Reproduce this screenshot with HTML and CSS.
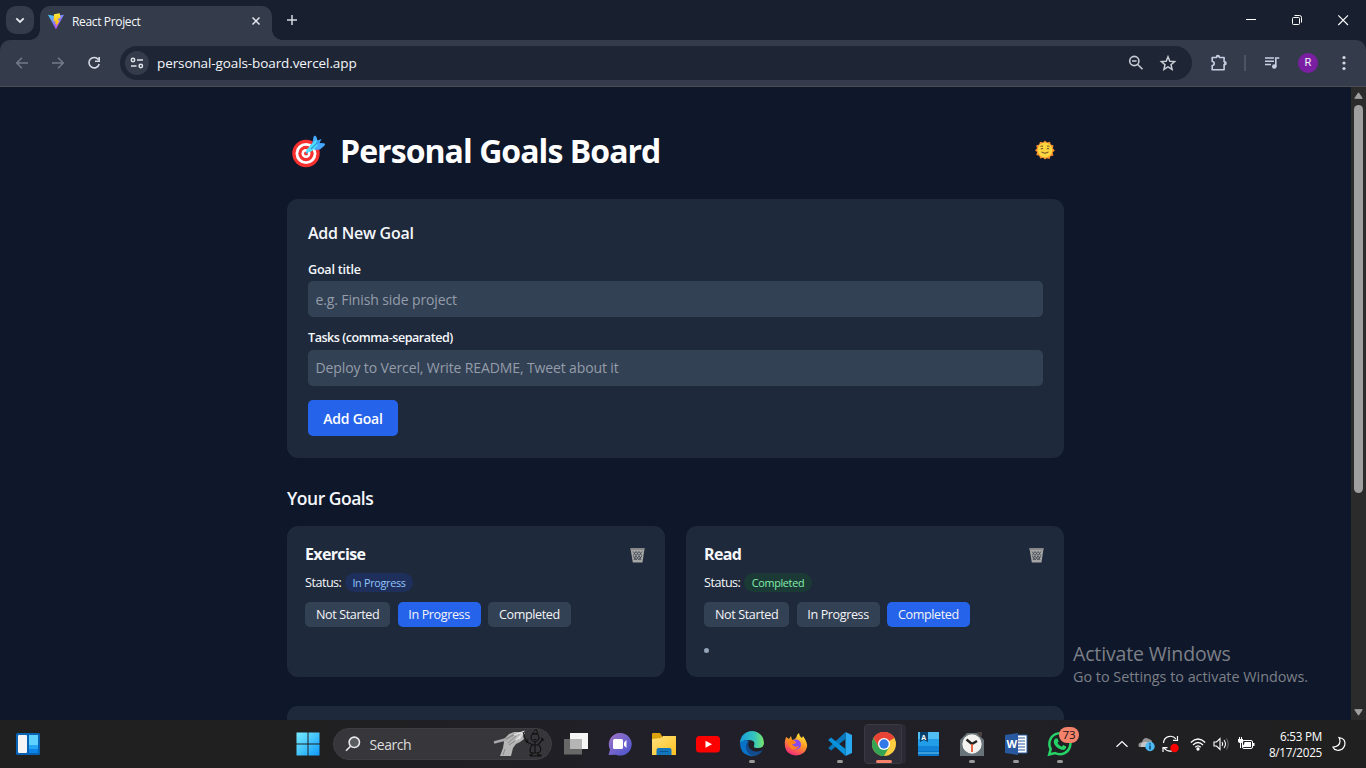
FILE: index.html
```html
<!DOCTYPE html>
<html lang="en">
<head>
<meta charset="utf-8">
<title>React Project</title>
<link rel="stylesheet" href="styles.css">
</head>
<body>
<div class="desktop">
  <header class="tabstrip">
    <div class="tab-search"><svg width="28" height="28" viewBox="0 0 28 28"><path d="M10.3 12.3l3.7 3.7 3.7-3.7" fill="none" stroke="#e6e9f0" stroke-width="1.8"/></svg></div>
    <div class="tab">
      <svg width="16" height="16" viewBox="0 0 16 16"><defs><linearGradient id="vite" x1="0" y1="0" x2=".7" y2="1"><stop offset="0" stop-color="#41d1ff"/><stop offset="1" stop-color="#bd34fe"/></linearGradient><linearGradient id="bolt" x1="0" y1="0" x2="0" y2="1"><stop offset="0" stop-color="#ffea3a"/><stop offset="1" stop-color="#ffa800"/></linearGradient></defs><path d="M0 1.8L7 3l9-1.2L8.3 15.8q-.4.4-.7 0z" fill="url(#vite)"/><path d="M11.8.2L6 1.3 5.6 8.4l2-.4-.5 3 1.4-.3-.8 3.6 4-6.8-1.9.3.9-2.8h1.8z" fill="url(#bolt)"/></svg>
      <span class="tab-title">React Project</span>
      <svg class="tab-close" width="10" height="10" viewBox="0 0 10 10"><path d="M1.5 1.5l7 7m0-7l-7 7" stroke="#e6e9f0" stroke-width="1.5"/></svg>
    </div>
    <svg class="new-tab" width="12" height="12" viewBox="0 0 12 12"><path d="M6 1v10M1 6h10" stroke="#d4d9e4" stroke-width="1.5"/></svg>
    <div class="caption">
      <svg width="46" height="40" viewBox="0 0 46 40"><path d="M18 19.5h10" stroke="#fff"/></svg>
      <svg width="46" height="40" viewBox="0 0 46 40"><rect x="18.500" y="17.500" width="7" height="7" rx="1" fill="none" stroke="#fff"/><path d="M20.500 15.500h5q2 0 2 2v5" fill="none" stroke="#fff"/></svg>
      <svg width="46" height="40" viewBox="0 0 46 40"><path d="M18.300 15.300l9.700 9.700m0-9.700l-9.700 9.700" stroke="#fff" stroke-width="1.100"/></svg>
    </div>
  </header>
  <nav class="toolbar">
    <svg class="nav-icon" width="36" height="46" viewBox="0 0 36 46"><path d="M24 23H13m5-5.300L12.700 23l5.300 5.300" fill="none" stroke="#737b8b" stroke-width="1.500"/></svg>
    <svg class="nav-icon" width="36" height="46" viewBox="0 0 36 46"><path d="M12 23h11m-5-5.300l5.300 5.300-5.300 5.300" fill="none" stroke="#737b8b" stroke-width="1.500"/></svg>
    <svg class="nav-icon" width="36" height="46" viewBox="0 0 36 46"><path d="M22.300 19.500A5.200 5.200 0 1 0 23.200 24M23.200 17v4.200H19" fill="none" stroke="#d4d9e4" stroke-width="1.600"/></svg>
    <div class="omnibox">
      <div class="site-info"><svg width="14" height="12" viewBox="0 0 14 12" fill="none" stroke="#dfe3ea" stroke-width="1.500"><circle cx="3" cy="3" r="1.700"/><path d="M7 3h6M1 9h5.500"/><circle cx="10.800" cy="9" r="1.700"/></svg></div>
      <span class="url">personal-goals-board.vercel.app</span>
      <svg class="omni-zoom" width="16" height="16" viewBox="0 0 16 16" fill="none" stroke="#c8ccd4" stroke-width="1.600"><circle cx="6.300" cy="6" r="4.600"/><path d="M9.700 9.500l4.800 4.800M4 6h4.600"/></svg>
      <svg class="omni-star" width="16" height="16" viewBox="0 0 16 16"><path d="M8 1.800l1.800 4.400 4.800.4-3.600 3.100 1.100 4.700L8 11.900l-4.100 2.500L5 9.700 1.400 6.600l4.800-.4z" fill="none" stroke="#c8ccd4" stroke-width="1.500"/></svg>
    </div>
    <div class="actions">
      <svg width="18" height="18" viewBox="0 0 18 18"><path d="M2.200 3.500h4.300V3a1.400 1.400 0 0 1 2.800 0v.5h4.800v4.300h.5a1.400 1.400 0 0 1 0 2.800h-.5v5.200H2.200v-4.300a2 2 0 0 0 0-4z" fill="none" stroke="#c7d0e2" stroke-width="1.600" stroke-linejoin="round"/><path d="M6.500 3a1.400 1.400 0 0 1 2.800 0m4.800 4.800a1.400 1.400 0 0 1 0 2.800" fill="#c7d0e2"/></svg>
      <i class="divider"></i>
      <svg width="16" height="14" viewBox="0 0 16 14"><path d="M1 2h9M1 5.300h9M1 8.600h6" stroke="#c7d0e2" stroke-width="1.500"/><path d="M11.800 10.500V2h3.500" fill="none" stroke="#c7d0e2" stroke-width="1.600"/><circle cx="10.300" cy="10.500" r="2.300" fill="#c7d0e2"/></svg>
      <span class="avatar">R</span>
      <svg width="4" height="16" viewBox="0 0 4 16" fill="#d4d9e4"><circle cx="2" cy="2.500" r="1.600"/><circle cx="2" cy="8" r="1.600"/><circle cx="2" cy="13.500" r="1.600"/></svg>
    </div>
  </nav>

  <div class="viewport">
    <main class="page">
      <div class="container">
        <div class="page-head">
          <svg width="34" height="34" viewBox="0 0 34 34"><circle cx="14" cy="18.500" r="13.700" fill="#f8312f"/><circle cx="14" cy="18.500" r="10.500" fill="#fff"/><circle cx="14" cy="18.500" r="7.700" fill="#f8312f"/><circle cx="14" cy="18.500" r="4.500" fill="#fff"/><circle cx="14" cy="18.500" r="2" fill="#f8312f"/><path d="M14 18.500L24 8" stroke="#35b9ee" stroke-width="1.600"/><path d="M18 10.500l2.500-3L21.500 2q1-3 3 0L25.500 5.500l4-1.500-2 4 4.500.2q2 1 0 2.800l-4 3.500-5 .5z" fill="#46a8ff"/><path d="M14.500 14.500L22 7l3-3-1 5 2 1-6 6q-3 2-5.500 1-.5-1 0-2.500z" fill="#50e2ff"/><path d="M19 14l7.500-7.500" stroke="#2e9bdc" stroke-width="1.300"/></svg>
          <h1>Personal Goals Board</h1>
          <svg class="sun" width="20" height="20" viewBox="0 0 20 20"><path d="M10 .5l2 2 3-.7.7 2.800 2.900.9-.8 2.800 2 2.200-2.200 2 .8 3-2.900.7-1 2.800-2.800-.8L10 19.500l-2-1.700-2.800.8-1-2.800-2.900-.7.8-3L0 10.500l2-2.200-.8-2.800 3-.9.8-2.800 3 .7z" fill="#f9902d"/><circle cx="10" cy="10" r="7.400" fill="#fcd53f"/><path d="M5.500 6.500q1.300-1 2.500-.2m4 0q1.200-.8 2.500.2M5.800 9q1.200-1.300 2.400 0m3.600 0q1.200-1.300 2.400 0M6.500 12q3.500 2.600 7 0" fill="none" stroke="#6b482a"/></svg>
        </div>
        <section class="form-card">
          <h2>Add New Goal</h2>
          <label class="label-title">Goal title</label>
          <div class="field"><span class="ph-title">e.g. Finish side project</span></div>
          <label class="label-tasks">Tasks (comma-separated)</label>
          <div class="field"><span class="ph-tasks">Deploy to Vercel, Write README, Tweet about it</span></div>
          <button class="add"><span>Add Goal</span></button>
        </section>
        <h2 class="section-title">Your Goals</h2>
        <div class="goals">
          <article class="goal">
            <div class="goal-head"><h3 class="name-exercise">Exercise</h3><svg width="16" height="16" viewBox="0 0 16 16"><use href="#bin"/></svg></div>
            <p class="status"><span class="status-label">Status:</span><span class="pill progress">In Progress</span></p>
            <div class="states"><button>Not Started</button><button class="on">In Progress</button><button>Completed</button></div>
          </article>
          <article class="goal">
            <div class="goal-head"><h3 class="name-read">Read</h3><svg width="16" height="16" viewBox="0 0 16 16"><use href="#bin"/></svg></div>
            <p class="status"><span class="status-label">Status:</span><span class="pill done">Completed</span></p>
            <div class="states"><button>Not Started</button><button>In Progress</button><button class="on">Completed</button></div>
            <i class="bullet"></i>
          </article>
        </div>
        <section class="next-card"></section>
      </div>
      <div class="watermark"><div class="wm-title">Activate Windows</div><div class="wm-text">Go to Settings to activate Windows.</div></div>
    </main>
    <aside class="scrollbar">
      <svg width="9" height="7" viewBox="0 0 9 7"><path d="M4.500.8L8.200 6.300H.8z" fill="#a0a0a0" stroke="#a0a0a0" stroke-linejoin="round"/></svg>
      <i class="thumb"></i>
      <svg class="down" width="9" height="7" viewBox="0 0 9 7"><path d="M4.500 6.200L8.200.7H.8z" fill="#a0a0a0" stroke="#a0a0a0" stroke-linejoin="round"/></svg>
    </aside>
  </div>

  <footer class="taskbar">
    <svg class="widgets" width="24" height="22" viewBox="0 0 24 22"><rect width="24" height="22" rx="1.500" fill="#0863b4"/><rect x="2" y="2" width="9" height="18" rx="1" fill="#f5f5f5"/><path d="M13 2h9v10h-9z" fill="#60d2ff"/><path d="M13 12h9v4h-9z" fill="#27a5f5"/><path d="M13 16h9v4h-9z" fill="#0b83e8"/></svg>
    <div class="cell start"><svg width="24" height="24" viewBox="0 0 24 24"><defs><linearGradient id="win" gradientUnits="userSpaceOnUse" x1="0" y1="0" x2="24" y2="24"><stop stop-color="#7aefff"/><stop offset="1" stop-color="#0d98fa"/></linearGradient></defs><path d="M.5.500h11v11H.5zM12.500.500h11v11h-11zM.5 12.500h11v11H.5zM12.500 12.500h11v11h-11z" fill="url(#win)"/></svg></div>
    <div class="search">
      <svg width="16" height="16" viewBox="0 0 16 16" fill="none" stroke="#e8e8e8" stroke-width="1.600"><circle cx="9.300" cy="6.300" r="5.200" fill="#595d60"/><path d="M5.500 10.200L1 14.800"/></svg>
      <span>Search</span>
      <svg class="doodle" width="50" height="28" viewBox="0 0 50 28"><path d="M9 10l6-6 5-2h8l3 1-2 3 1 3-4 3-4 2-3 4-2 8H6l3-8 1-6z" fill="#b5b5b5"/><path d="M0 12.500L13 9l8-5" fill="none" stroke="#a8a8a8" stroke-width="2.500"/><path d="M12 9l7-4 6-1M14 13l8-7M15 15l6-4M11 19l-2 6" stroke="#7b7b7b" fill="none" stroke-width=".8"/><path d="M20 5l9-3-4 7M22 10l4-4" stroke="#e0e0e0" stroke-width="1.600" fill="none"/><path d="M29 2l4 11m0 0l-2-3m2 3l1-4M38 4l4-5 2 5z" fill="none" stroke="#111"/><circle cx="41" cy="7.500" r="4" fill="none" stroke="#111" stroke-width="1.200"/><path d="M39 7h.1M43 7h.1M39.500 9.500h3M41 12v3M33 12l6 3h5l5-6m-2-1l2 1v2M38 15q-4 7 0 8h3v-8m0 8h3q5-2 1-8M38 23v2h-3m9-2v2h4M36 26h11" fill="none" stroke="#111" stroke-width="1.200"/></svg>
    </div>
    <div class="cell"><svg width="24" height="24" viewBox="0 0 24 24"><rect x="6" y="1" width="18" height="16" fill="#f5f5f5"/><rect y="7" width="18" height="15.500" fill="#686868"/><path d="M6 7h12v10H6z" fill="#b5b5b5"/></svg></div>
    <div class="cell"><svg width="24" height="24" viewBox="0 0 24 24"><defs><linearGradient id="chat" x2="1" y2="1"><stop stop-color="#a074c8"/><stop offset="1" stop-color="#4754ce"/></linearGradient></defs><path d="M12 1a11.300 11.300 0 1 1-4 21.700L.5 23 2 17.500A11.300 11.300 0 0 1 12 1z" fill="url(#chat)"/><rect x="5" y="7" width="10" height="10" rx="1.500" fill="#fff"/><path d="M16 10.500L18.500 8v8L16 13.500z" fill="#fff"/></svg></div>
    <div class="cell"><svg width="24" height="24" viewBox="0 0 24 24"><defs><linearGradient id="fold" x2="1" y2="1"><stop stop-color="#ffe27c"/><stop offset="1" stop-color="#ffc021"/></linearGradient></defs><path d="M0 2q0-1 1-1h7l2 3v5H0z" fill="#dda10b"/><path d="M0 7l9-1 2-2h13v19H0z" fill="url(#fold)"/><path d="M4.500 23v-5q0-2 2-2h11q2 0 2 2v5z" fill="#1276bd"/><path d="M8 19.500h8" stroke="#0b5494"/></svg></div>
    <div class="cell"><svg width="24" height="24" viewBox="0 0 24 24"><rect y="4" width="24" height="16.500" rx="3.500" fill="red"/><path d="M9.500 8.700l6.500 3.500-6.500 3.600z" fill="#fff"/></svg></div>
    <div class="cell run"><svg width="24" height="24" viewBox="0 0 24 24"><defs><linearGradient id="edge" x2="1"><stop stop-color="#189ee0"/><stop offset=".6" stop-color="#35c5bb"/><stop offset="1" stop-color="#78e66b"/></linearGradient></defs><path d="M0 11A12 12 0 0 1 24 11q0 5-6 5-5 0-4-2 2-6-5-6Q3 8 0 11z" fill="url(#edge)"/><path d="M0 11q4-4 9-2-4 3-1 9 4 5 13 1-4 6-11 5Q0 22 0 11z" fill="#0874c9"/><path d="M9 9q-4 2-3 8 2 6 7 7 6 0 10-6-8 4-13-1-3-4-1-8z" fill="#124c8f"/></svg></div>
    <div class="cell"><svg width="24" height="24" viewBox="0 0 24 24"><defs><linearGradient id="fire" x1=".8" x2=".3" y2="1"><stop stop-color="#fff33f"/><stop offset=".45" stop-color="#ff9b24"/><stop offset="1" stop-color="#f5257b"/></linearGradient></defs><path d="M2 5l3 2 2-3 1 4q2 0 4-2 1-4 3-5 0 3 3 5l1-2q5 7 4 11-2 8-11 8.500Q3 23 1 15 0 10 2 5z" fill="url(#fire)"/><circle cx="12" cy="12.500" r="5" fill="#874af2"/><path d="M4 8q5-1 8 2 0 2-4 2 2 4 7 2-2 4-7 3-5-3-4-9z" fill="#ff841c"/></svg></div>
    <div class="cell run"><svg width="24" height="24" viewBox="0 0 24 24"><path d="M17.500 0L24 3v18l-6.500 3z" fill="#28a9f2"/><path d="M17.500 0v7L3 18.500.2 16z" fill="#0879be"/><path d="M.2 8L3 5.500 17.500 17v7z" fill="#0a91dc"/></svg></div>
    <div class="cell active"><svg width="24" height="24" viewBox="0 0 24 24"><circle cx="12" cy="12" r="12" fill="#ffcd40"/><path d="M12 12L1.600 6A12 12 0 0 1 22.400 6z" fill="#e94335"/><path d="M1.600 6A12 12 0 0 0 12 24l5.200-9H6.800z" fill="#34a353"/><path d="M12 6h10.400a12 12 0 0 0-20.800 0l5.200 9z" fill="#e94335"/><circle cx="12" cy="12" r="6" fill="#fff"/><circle cx="12" cy="12" r="4.700" fill="#3479e8"/></svg></div>
    <div class="cell"><svg width="24" height="24" viewBox="0 0 24 24"><rect x="2" width="21" height="24" rx="1" fill="#0876ca"/><path d="M2 0h21v7H2z" fill="#50bdf5"/><path d="M2 7h21v7H2z" fill="#229de8"/><path d="M2 14h21v5H2z" fill="#1184d9"/><path d="M2 21h21" stroke="#72c7f1"/><path d="M4 0h8v10l-4-2-4 2z" fill="#09416e"/><text x="5.300" y="7.500" class="dict">A</text></svg></div>
    <div class="cell run"><svg width="24" height="24" viewBox="0 0 24 24"><path d="M0 8l7-7h10l7 7v16H0z" fill="#69737a"/><path d="M17 0h5v4l-2 1z" fill="#4a423f"/><circle cx="12" cy="12" r="9.700" fill="#f2f2f0"/><path d="M6.500 7.500L12 12l5-3" fill="none" stroke="#222" stroke-width="2.400"/><path d="M12 12v8" stroke="#e55b34" stroke-width="1.800"/></svg></div>
    <div class="cell run"><svg width="24" height="24" viewBox="0 0 24 24"><path d="M12 3h11v18H12z" fill="#fff" stroke="#2859a0"/><path d="M14 6h7M14 9h7M14 12h7M14 15h7M14 18h7" stroke="#2859a0"/><path d="M1 3l13-2v22L1 21z" fill="#2859a0"/><text x="2.500" y="16" class="word">W</text></svg></div>
    <div class="cell run whatsapp"><svg width="26" height="26" viewBox="0 0 26 26"><path d="M2.200 23.500l1.500-5.700A10.500 10.500 0 1 1 8 22z" fill="none" stroke="#25d366" stroke-width="2.500"/><path d="M8.300 7.500l2.200 0 1.200 3-1.200 1.400q1.300 2.700 4.200 3.800l1.500-1.600 3 1.500q.2 3-3 3.300-5-.3-8.400-5-2.300-3.700.5-6.400z" fill="#25d366"/></svg><span class="badge">73</span></div>
    <div class="tray">
      <svg class="t-chevron" width="14" height="8" viewBox="0 0 14 8"><path d="M1.500 6.700L7 1.500l5.500 5.200" fill="none" stroke="#fff" stroke-width="1.200"/></svg>
      <svg class="t-cloud" width="18" height="16" viewBox="0 0 18 16"><path d="M1 11Q-1 7 4 6q2-6 7-3 4 1 3 5v3z" fill="#949494"/><path d="M3 11q-1-4 3-5 4-1 7 3v2z" fill="#c4c4c4"/><circle cx="12" cy="10.500" r="4.700" fill="#4cbbf5"/><path d="M12 9.500v4M12 7.300v1.300" stroke="#073a62" stroke-width="1.400"/></svg>
      <svg class="t-sync" width="18" height="18" viewBox="0 0 18 18"><path d="M1.500 8A7 7 0 0 1 14 4M15.500 1v4.300H11M1 17v-4.300h4.500M2 13q3 4 8 3" fill="none" stroke="#fff" stroke-width="1.200"/><circle cx="12.500" cy="13" r="4.200" fill="red"/></svg>
      <svg class="t-wifi" width="16" height="14" viewBox="0 0 16 14" fill="none" stroke="#fff" stroke-width="1.300"><path d="M.8 5.500q7.200-7 14.400 0M3 8q5-5 10 0M5.300 10.300q2.700-2.800 5.400 0"/><circle cx="8" cy="12" r="1" fill="#fff"/></svg>
      <svg class="t-volume" width="17" height="14" viewBox="0 0 17 14" fill="none" stroke="#fff" stroke-width="1.100"><path d="M1 5h2.500L7 1.500v11L3.500 9H1zM9 5q1.500 2 0 4M11 3q3 4 0 8"/><path d="M13.300 1.500q4 5.500 0 11" stroke="#666"/></svg>
      <svg class="t-battery" width="17" height="14" viewBox="0 0 17 14"><rect x="4.500" y="3.500" width="10" height="8" rx="1.500" fill="none" stroke="#fff"/><path d="M6.500 5H13v5H5V8.500q1.500-.7 1.500-3.500zM15 6h1.500v3H15zM0 2h5v2q0 2-2 2v5H2V6Q0 6 0 4z" fill="#fff"/><path d="M1.500 0v3M3.500 0v3" stroke="#fff"/></svg>
      <div class="clock"><span class="time">6:53 PM</span><span class="date">8/17/2025</span></div>
      <svg class="t-moon" width="14" height="16" viewBox="0 0 14 16"><path d="M7 1.500q7 1 5.800 7.500-2 6-7.800 5.200-3-.5-4-3 7-1 7-6 0-2-1-3.700z" fill="none" stroke="#fff" stroke-width="1.200"/></svg>
    </div>
  </footer>
</div>
<svg class="defs" width="0" height="0"><defs><g id="bin"><path d="M.5 1.500h14l-2 14H2.800z" fill="#a5a5a5"/><path d="M.5 1h14v2H.5z" fill="#888"/><path d="M3 4.500l1.500 2L6 4.500l1.500 2 1.500-2 1.500 2 1.500-2M3.300 8.500l1.200-2L6 8.500l1.500-2L9 8.500l1.500-2 1.200 2M3.500 9l1 2L6 9l1.500 2L9 9l1.500 2 1-2M4 13l1-2 1 2 1.500-2L9 13l1-2 1 2" fill="none" stroke="#353d47" stroke-width=".8"/></g></defs></svg>
</body>
</html>
```
FILE: styles.css
```css
* { box-sizing: border-box; }
body { margin: 0; font-family: "Open Sans", "Noto Sans", sans-serif; color: #f5f7fa; overflow: hidden; }
h1, h2, h3, p { margin: 0; }
svg { display: block; flex: none; overflow: visible; }
button { border: 0; padding: 0; font-family: inherit; color: #f3f4f6; white-space: nowrap; }
span, label { white-space: nowrap; }
.defs { display: none; }
.desktop { width: 1366px; height: 768px; display: flex; flex-direction: column; overflow: hidden; background: #18202f; }

.tabstrip { height: 40px; flex: none; display: flex; align-items: flex-start; }
.tab-search { width: 28px; height: 28px; margin: 6px 6px 0; border-radius: 10px; background: #343c4b; }
.tab { position: relative; width: 232px; height: 34px; margin-top: 6px; padding: 0 11px 4px 8px; display: flex; align-items: center; background: #343c4b; border-radius: 10px 10px 0 0; }
.tab::before, .tab::after { content: ""; position: absolute; bottom: 0; width: 10px; height: 10px; }
.tab::before { left: -10px; background: radial-gradient(circle at 0 0, transparent 9.5px, #343c4b 10px); }
.tab::after { right: -10px; background: radial-gradient(circle at 100% 0, transparent 9.5px, #343c4b 10px); }
.tab-title { margin-left: 8px; font-size: 12px; letter-spacing: -.35px; }
.tab-close { margin-left: auto; }
.new-tab { margin: 14px 0 0 14px; }
.caption { display: flex; margin-left: auto; }

.toolbar { height: 47px; flex: none; display: flex; background: #343c4b; border-bottom: 1px solid #4b4e55; border-radius: 10px 10px 0 0; padding-left: 4px; }
.omnibox { width: 1072px; height: 34px; margin: 6px 0 0 8px; padding-left: 5px; display: flex; align-items: center; border-radius: 17px; background: #1e2636; }
.site-info { width: 24px; height: 24px; border-radius: 50%; background: #343c4b; display: grid; place-items: center; }
.url { margin-left: 8px; font-size: 13.5px; letter-spacing: -.1px; }
.omni-zoom { margin-left: auto; }
.omni-star { margin: 0 16px; }
.actions { display: flex; align-items: center; height: 46px; padding-left: 18px; }
.divider { width: 2px; height: 16px; margin: 0 18px 0 16px; background: #4b5464; }
.avatar { width: 20px; height: 20px; margin: 0 24px 0 18px; border-radius: 50%; background: #7b1fa2; font: 11px/20px Roboto, sans-serif; text-align: center; }

.viewport { height: 633px; flex: none; display: flex; }
.page { position: relative; width: 1351px; height: 633px; overflow: hidden; background: #0f172a; }
.container { width: 777px; margin: 0 auto; }
.page-head { display: flex; height: 112px; padding: 48px 9px 0 5px; }
.page-head h1 { margin-left: 14px; font-size: 32px; line-height: 32px; font-weight: 700; color: #fff; letter-spacing: -.95px; }
.sun { margin: 5px 0 0 auto; }
.form-card { height: 259px; border-radius: 11px; background: #1e293b; padding: 21px; display: flex; flex-direction: column; align-items: flex-start; }
.form-card h2 { font-size: 16px; font-weight: 600; line-height: 27px; letter-spacing: -.25px; }
.form-card label { font-size: 12.600px; font-weight: 600; line-height: 20px; letter-spacing: -.35px; margin-top: 12px; }
.form-card .label-title { height: 20px; line-height: 22px; letter-spacing: -.25px; }
.form-card .label-tasks { margin-top: 11px; letter-spacing: -.48px; }
.field { width: 735px; height: 36px; margin-top: 2px; padding: 0 7.500px; border-radius: 5px; background: #334155; color: #949da9; font-size: 14px; line-height: 37px; }
.label-tasks + .field { line-height: 36px; }
.field span { letter-spacing: -.12px; display: block; }
.add { width: 90px; height: 36px; margin-top: 14px; border-radius: 5px; background: #2563eb; color: #fff; font-size: 14px; font-weight: 650; line-height: 35px; letter-spacing: -.2px; }
.section-title { margin-top: 27px; font-size: 17.500px; line-height: 27px; font-weight: 600; letter-spacing: -.5px; }
.goals { display: grid; grid-template-columns: 378px 378px; gap: 21px; margin-top: 14px; }
.goal { height: 151px; border-radius: 11px; background: #1e293b; padding: 18px; }
.goal-head { display: flex; justify-content: space-between; align-items: center; height: 21px; padding-right: 1.500px; }
.goal-head h3 { font-size: 16px; line-height: 21px; font-weight: 700; letter-spacing: -.65px; }
.status { display: flex; align-items: center; height: 19px; margin-top: 8px; }
.status-label { width: 37px; font-size: 12.600px; letter-spacing: -.5px; }
.pill { width: 68px; height: 19px; margin-left: 3px; border-radius: 10px; text-align: center; font-size: 10.800px; font-weight: 500; line-height: 19px; letter-spacing: -.3px; }
.progress { background: #1e2f5c; color: #93c5fd; }
.done { background: #1b3a36; color: #86efac; }
.states { display: flex; gap: 7.300px; margin-top: 10px; }
.states button { width: 83px; height: 25px; border-radius: 5px; background: #334155; font-size: 12.600px; line-height: 25px; letter-spacing: -.4px; }
.states button:first-child { width: 85.300px; }
.states .on { background: #2563eb; }
.bullet { display: block; width: 5px; height: 5px; margin-top: 21px; border-radius: 50%; background: #94a3b8; }
.next-card { height: 100px; margin-top: 29px; border-radius: 11px; background: #1e293b; }
.watermark { position: absolute; left: 1073px; top: 554px; color: #7c8088; white-space: nowrap; }
.wm-title { font-size: 19.500px; line-height: 26px; letter-spacing: -.15px; }
.wm-text { font-size: 14.400px; line-height: 20px; letter-spacing: -.02px; }
.scrollbar { width: 15px; background: #2b2b2b; display: flex; flex-direction: column; align-items: center; padding: 5px 0 4px; }
.thumb { width: 9px; height: 388px; margin-top: 6px; border-radius: 5px; background: #9f9f9f; }
.down { margin-top: auto; }

.taskbar { height: 48px; flex: none; display: flex; align-items: center; background: linear-gradient(90deg, #202020 0, #202020 270px, #211f29 700px, #202024 1080px, #202020 1366px); }
.widgets { margin: 0 245.500px 0 16px; }
.cell { position: relative; width: 44px; height: 48px; flex: none; display: grid; place-items: center; }
.search { width: 219px; height: 32px; margin: 0 2.500px 0 3px; padding: 0 7px 0 11px; display: flex; align-items: center; border-radius: 16px; background: #37373b; border: 1px solid #3e3e42; font-size: 14px; }
.search span { margin-left: 9px; letter-spacing: -.45px; color: #ddd; }
.doodle { margin-left: auto; }
.run::after, .active::after { content: ""; position: absolute; left: 19px; bottom: 5px; width: 6px; height: 3px; border-radius: 2px; background: #9a9a9a; }
.active::before { content: ""; position: absolute; inset: 4px 4px 4px 2px; border: 1px solid #3b3a43; border-radius: 4px; background: #2f2e38; box-shadow: 4px 0 0 #2b2a34; }
.active svg { position: relative; }
.active::after { left: 14px; width: 16px; background: #f5826b; }
.badge { position: absolute; left: 21px; top: 7px; width: 20px; height: 16px; border-radius: 8px; background: #f5826b; color: #151515; font-size: 11.500px; line-height: 15px; text-align: center; letter-spacing: -.2px; }
.dict { font: bold 7px "Open Sans", sans-serif; fill: #fff; }
.word { font: bold 11px "Open Sans", sans-serif; fill: #fff; }
.tray { display: flex; align-items: center; margin-left: 33px; height: 48px; }
.t-cloud { margin-left: 9px; }
.t-sync { margin-left: 6px; }
.t-wifi { margin-left: 10px; }
.t-volume { margin-left: 7px; }
.t-battery { margin-left: 8px; }
.clock { width: 67px; display: flex; flex-direction: column; align-items: flex-end; font-size: 11.700px; line-height: 16px; letter-spacing: -.25px; color: #fff; padding-bottom: 1px; }
.t-moon { margin-left: 10px; }
```
